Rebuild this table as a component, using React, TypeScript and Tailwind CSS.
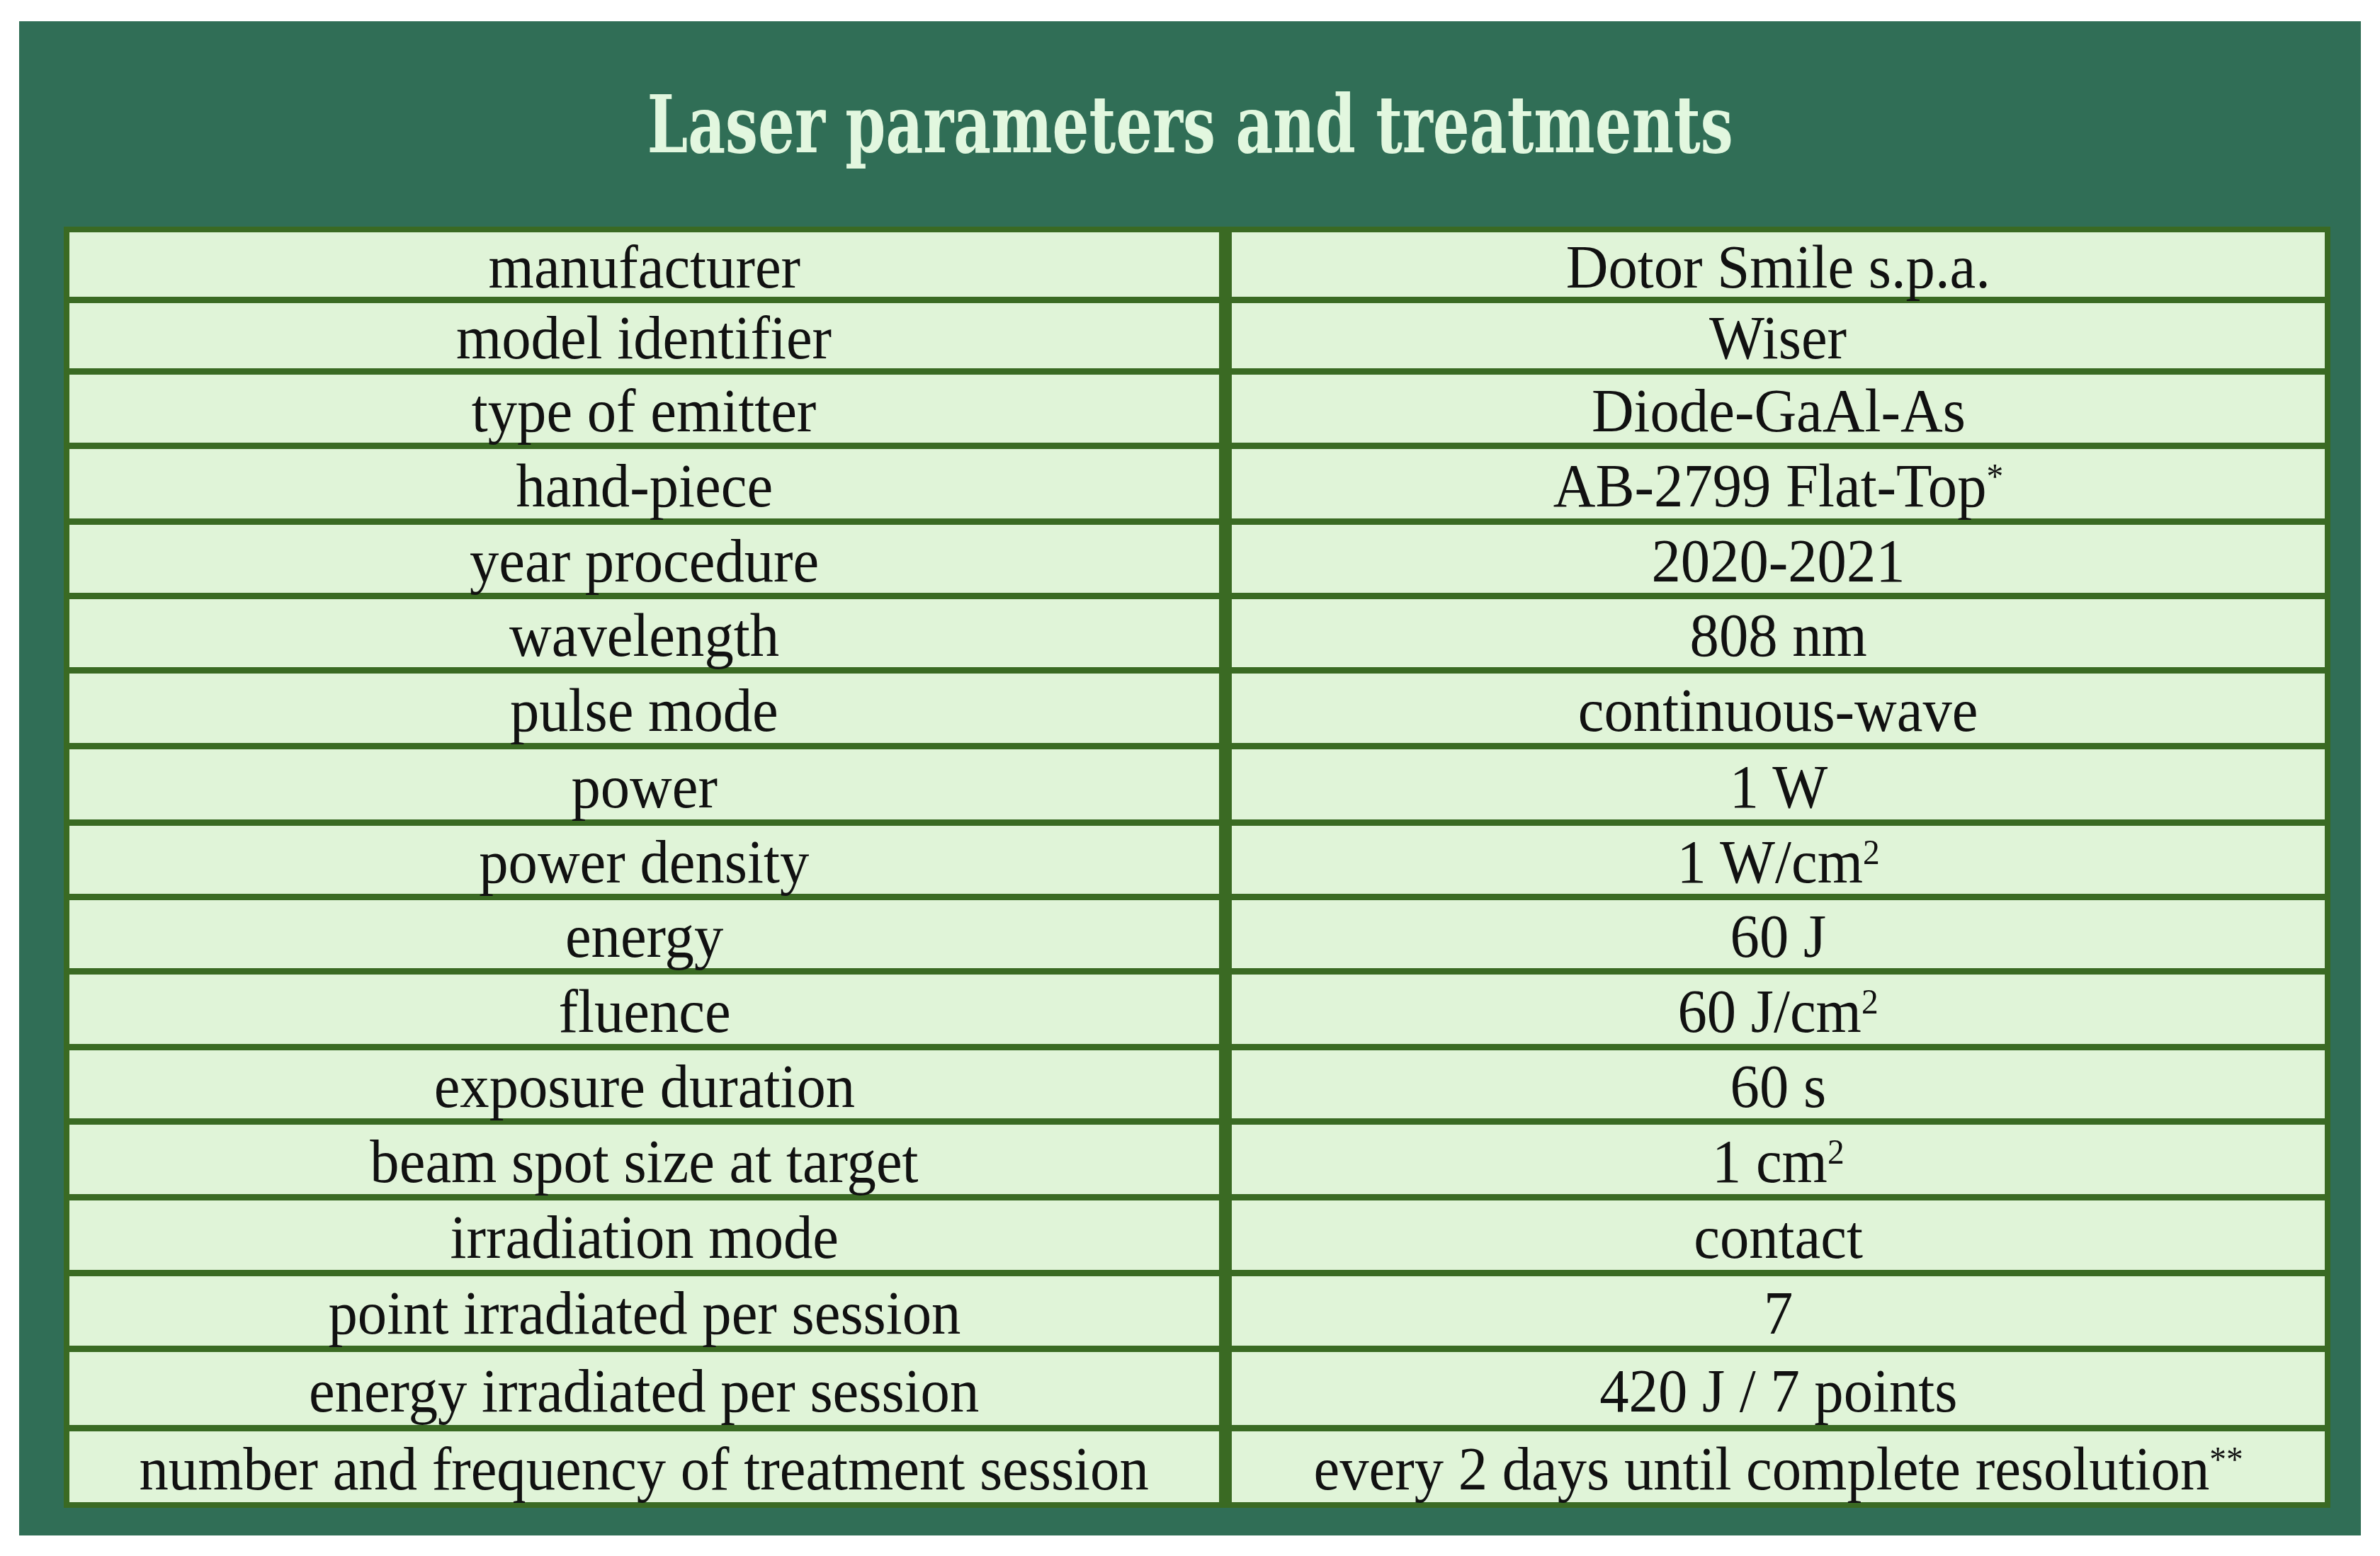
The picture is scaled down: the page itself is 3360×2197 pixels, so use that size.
import type { ReactNode } from "react";

function Sup({ children }: { children: ReactNode }) {
	return <span className="text-[50px] leading-none align-[26px]">{children}</span>;
}

// heights follow the reference row pitch (rows get slightly taller going down)
const rows: { label: ReactNode; value: ReactNode; h: string }[] = [
	{ label: "manufacturer", value: "Dotor Smile s.p.a.", h: "h-[91px]" },
	{ label: "model identifier", value: "Wiser", h: "h-[92px]" },
	{ label: "type of emitter", value: "Diode-GaAl-As", h: "h-[96px]" },
	{ label: "hand-piece", value: <>AB-2799 Flat-Top<Sup>*</Sup></>, h: "h-[98px]" },
	{ label: "year procedure", value: "2020-2021", h: "h-[96px]" },
	{ label: "wavelength", value: "808 nm", h: "h-[96px]" },
	{ label: "pulse mode", value: "continuous-wave", h: "h-[98px]" },
	{ label: "power", value: "1 W", h: "h-[99px]" },
	{ label: "power density", value: <>1 W/cm<Sup>2</Sup></>, h: "h-[96px]" },
	{ label: "energy", value: "60 J", h: "h-[96px]" },
	{ label: "fluence", value: <>60 J/cm<Sup>2</Sup></>, h: "h-[98px]" },
	{ label: "exposure duration", value: "60 s", h: "h-[96px]" },
	{ label: "beam spot size at target", value: <>1 cm<Sup>2</Sup></>, h: "h-[98px]" },
	{ label: "irradiation mode", value: "contact", h: "h-[98px]" },
	{ label: "point irradiated per session", value: "7", h: "h-[98px]" },
	{ label: "energy irradiated per session", value: "420 J / 7 points", h: "h-[103px]" },
	{
		label: "number and frequency of treatment session",
		value: <>every 2 days until complete resolution<Sup>**</Sup></>,
		h: "h-[100px]",
	},
];

function Cell({ children, h }: { children: ReactNode; h: string }) {
	return (
		<div className={`${h} flex items-center justify-center bg-[#e0f4d8] pt-[5px]`}>
			<span className="inline-block scale-x-[0.95] whitespace-nowrap text-[87px] leading-none text-[#111]">
				{children}
			</span>
		</div>
	);
}

export default function App() {
	return (
		<div className="h-[2197px] w-[3360px] bg-white pl-[27px] pt-[30px] font-['Liberation_Serif',serif]">
			<div className="flex h-[2138px] w-[3306px] flex-col bg-[#306e56]">
				<div className="flex h-[290px] justify-center pt-[90px]">
					<h1 className="inline-block scale-x-[0.81] whitespace-nowrap font-['DejaVu_Serif_Condensed','DejaVu_Serif',serif] text-[112px] font-bold leading-none text-[#e2f7df] font-stretch-condensed">
						Laser parameters and treatments
					</h1>
				</div>
				<div className="ml-[63px] grid w-[3200px] grid-cols-[1623px_1543px] gap-x-[18px] gap-y-[9px] bg-[#3a6a23] p-[8px]">
					{rows.map((r, i) => (
						<div key={i} className="contents">
							<Cell h={r.h}>{r.label}</Cell>
							<Cell h={r.h}>{r.value}</Cell>
						</div>
					))}
				</div>
			</div>
		</div>
	);
}
